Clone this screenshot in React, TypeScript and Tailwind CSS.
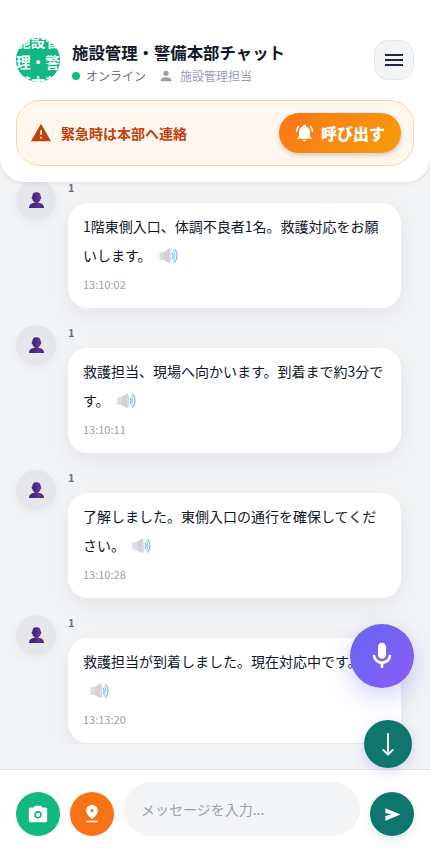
import React from "react";

const messages = [
  { text: "1階東側入口、体調不良者1名。救護対応をお願いします。", time: "13:10:02" },
  { text: "救護担当、現場へ向かいます。到着まで約3分です。", time: "13:10:11" },
  { text: "了解しました。東側入口の通行を確保してください。", time: "13:10:28" },
  { text: "救護担当が到着しました。現在対応中です。", time: "13:13:20" },
];

function Icon({ d, className }: { d: string; className: string }) {
  return (
    <svg viewBox="0 0 24 24" fill="currentColor" className={className} aria-hidden="true">
      <path fillRule="evenodd" d={d} />
    </svg>
  );
}

const paths = {
  account: "M12,4A4,4 0 0,1 16,8A4,4 0 0,1 12,12A4,4 0 0,1 8,8A4,4 0 0,1 12,4M12,14C16.42,14 20,15.79 20,18V20H4V18C4,15.79 7.58,14 12,14Z",
  menu: "M3,6H21V8H3V6M3,11H21V13H3V11M3,16H21V18H3V16Z",
  warning: "M13 14H11V9H13M13 18H11V16H13M1 21H23L12 2L1 21Z",
  bell: "M21,19V20H3V19L5,17V11C5,7.9 7.03,5.17 10,4.29C10,4.19 10,4.1 10,4A2,2 0 0,1 12,2A2,2 0 0,1 14,4C14,4.1 14,4.19 14,4.29C16.97,5.17 19,7.9 19,11V17L21,19M14,21A2,2 0 0,1 12,23A2,2 0 0,1 10,21M19.75,3.19L18.33,4.61C20.04,6.3 21,8.6 21,11H23C23,8.07 21.84,5.25 19.75,3.19M1,11H3C3,8.6 3.96,6.3 5.67,4.61L4.25,3.19C2.16,5.25 1,8.07 1,11Z",
  mic: "M12 14c1.66 0 3-1.34 3-3V5c0-1.66-1.34-3-3-3S9 3.34 9 5v6c0 1.66 1.34 3 3 3zm5.91-3c-.49 0-.9.36-.98.85C16.52 14.2 14.47 16 12 16s-4.52-1.8-4.93-4.15a.998.998 0 0 0-.98-.85c-.61 0-1.09.54-1 1.14.49 3 2.89 5.35 5.91 5.78V20c0 .55.45 1 1 1s1-.45 1-1v-2.08a6.993 6.993 0 0 0 5.91-5.78c.1-.6-.39-1.14-1-1.14z",
  camera: "M4 21q-.825 0-1.412-.587T2 19V7q0-.825.588-1.412T4 5h3.150L9 3h6l1.850 2H20q.825 0 1.413.588T22 7v12q0 .825-.587 1.413T20 21zM12 8.800a4.100 4.100 0 1 0 0 8.200a4.100 4.100 0 1 0 0-8.200zM12 10.500a2.400 2.400 0 1 1 0 4.800a2.400 2.400 0 1 1 0-4.800z",
  pin: "M5 22v-2h14v2zm7-4q-3.525-2.6-5.262-5.05T5 8.15q0-1.775.638-3.112T7.274 2.8t2.25-1.35T12 1t2.475.45t2.25 1.35t1.638 2.238T19 8.15q0 2.35-1.737 4.8T12 18m0-8q.825 0 1.413-.587T14 8t-.587-1.412T12 6t-1.412.588T10 8t.588 1.413T12 10",
  send: "M3 20v-6l8-2l-8-2V4l19 8z",
};

function Bust() {
  return (
    <svg viewBox="0 0 15 16" className="h-4 w-[15px]" aria-hidden="true">
      <defs>
        <linearGradient id="bust" gradientUnits="userSpaceOnUse" x1="0" y1="0" x2="15" y2="0">
          <stop offset="0" stopColor="#4a2a85" />
          <stop offset="0.35" stopColor="#432679" />
          <stop offset="0.65" stopColor="#5f3494" />
          <stop offset="1" stopColor="#42257a" />
        </linearGradient>
      </defs>
      <g fill="url(#bust)">
        <rect x="3.4" y="0.2" width="8.2" height="10" rx="3.8" />
        <rect x="2.6" y="4.4" width="9.800" height="2.600" rx="1.3" />
        <path d="M5.600 9.500h3.800v1.300c3.400.4 5.600 2 5.600 5.200H0c0-3.200 2.200-4.800 5.600-5.200z" />
      </g>
    </svg>
  );
}

function Speaker() {
  return (
    <svg viewBox="0 0 19 16" className="ml-[7px] inline-block h-4 w-[19px] align-[-3px]" aria-hidden="true">
      <path d="M0.300 4.200 4.800 4 10.500 0.600V15L4.800 12 0.300 11.800z" fill="#dedbe2" />
      <path d="M4.800 4 10.500 0.600V15L4.800 12z" fill="#d4d0da" />
      <path d="M10.500 0.600c1.900 2.500 1.900 11.900 0 14.400-1.200-3-1.200-11.400 0-14.400z" fill="#e4e1e8" stroke="#c6c2cd" strokeWidth="0.500" />
      <g fill="none" stroke="#84bdf0" strokeWidth="1.300" strokeLinecap="round">
        <path d="M13.300 5.300c1 1.500 1 3.600 0 5.100" />
        <path d="M14.400 3.200c2 2.600 2 6.700 0 9.300" stroke="#a9d2f5" />
        <path d="M15.900 1.400c2.800 3.600 2.800 9.200 0 12.800" />
      </g>
    </svg>
  );
}

function Header() {
  return (
    <header className="relative z-10 h-[182px] shrink-0 rounded-b-3xl bg-white px-4 pt-[38px] shadow-[0_1px_4px_rgba(0,0,0,0.1)]">
      <div className="flex h-11 items-center">
        <div className="flex size-11 shrink-0 items-center justify-center overflow-hidden rounded-full bg-[#10b981] pt-[3px] text-center text-[14.6px] leading-[21px] font-bold text-white">
          施設管理・警備本部
        </div>
        <div className="ml-3 flex-1 pt-[5px]">
          <h1 className="text-[16.4px] leading-6 font-bold whitespace-nowrap text-gray-900">施設管理・警備本部チャット</h1>
          <div className="mt-0.5 flex h-5 items-center text-xs leading-5">
            <span className="mr-1.5 size-2 rounded-full bg-[#10b981]" />
            <span className="text-gray-500">オンライン</span>
            <Icon d={paths.account} className="mr-1.5 ml-3 size-4 text-gray-400" />
            <span className="text-gray-400">施設管理担当</span>
          </div>
        </div>
        <button className="flex size-10 items-center justify-center rounded-[14px] border border-gray-200 bg-gray-100 text-gray-800">
          <Icon d={paths.menu} className="size-6 shrink-0" />
        </button>
      </div>
      <div className="mt-[18px] flex h-[66px] items-center justify-between rounded-3xl border border-[#fbd5ab] bg-[#fff7ed] pr-3 pl-[13px]">
        <div className="flex items-center gap-[9px] text-sm font-bold text-[#c2410c]">
          <Icon d={paths.warning} className="size-[22px]" />
          緊急時は本部へ連絡
        </div>
        <button className="flex h-10 w-[122px] items-center justify-center gap-[7px] rounded-full bg-linear-135 from-[#f97316] to-[#f59e0b] text-base font-black text-white shadow-[0_2px_5px_rgba(0,0,0,0.2)]">
          <Icon d={paths.bell} className="-mt-0.5 size-[19px]" />
          呼び出す
        </button>
      </div>
    </header>
  );
}

function Message({ text, time }: { text: string; time: string }) {
  return (
    <div className="flex h-[145.2px] shrink-0 items-start gap-3 pl-4">
      <div className="flex size-10 shrink-0 items-center justify-center rounded-full bg-gray-200 shadow-[0_4px_12px_rgba(0,0,0,0.05)]">
        <Bust />
      </div>
      <div className="w-[333px]">
        <div className="h-[23px] text-[11px] leading-[15px] font-bold text-gray-500">1</div>
        <div className="h-[105px] rounded-[20px] bg-white px-[15px] pt-[9px] shadow-[0_8px_24px_rgba(15,23,42,0.07)]">
          <p className="h-[58px] text-sm leading-[29px] text-gray-900">
            {text}
            <Speaker />
          </p>
          <div className="mt-1.5 text-[11px] leading-4 text-gray-400">{time}</div>
        </div>
      </div>
    </div>
  );
}

function Composer() {
  return (
    <footer className="flex h-[91px] shrink-0 items-end gap-2.5 border-t border-gray-200 bg-white px-4 pb-6">
      <button className="flex size-11 shrink-0 items-center justify-center rounded-full bg-[#10b981] text-white">
        <Icon d={paths.camera} className="size-[22px]" />
      </button>
      <button className="flex size-11 shrink-0 items-center justify-center rounded-full bg-[#f97316] text-white">
        <Icon d={paths.pin} className="size-5" />
      </button>
      <div className="flex h-[54px] flex-1 items-center rounded-[27px] bg-gray-100 px-[17px] text-sm text-gray-400">
        メッセージを入力...
      </div>
      <button className="flex size-11 shrink-0 items-center justify-center rounded-full bg-[#0f766e] text-white shadow-[0_4px_10px_rgba(15,118,110,0.15)]">
        <Icon d={paths.send} className="ml-px size-[19px]" />
      </button>
    </footer>
  );
}

export default function App() {
  return (
    <div className="relative flex h-[860px] w-[430px] flex-col overflow-hidden bg-gray-100 font-['Noto_Sans_CJK_JP',sans-serif]">
      <Header />
      <main className="h-[561.5px] shrink-0 overflow-hidden">
        <div className="-mt-[2.5px] flex flex-col">
          {messages.map((m) => (
            <Message key={m.time} {...m} />
          ))}
        </div>
      </main>
      <div className="flex-1" />
      <Composer />
      <button className="absolute top-[624px] left-[350px] z-20 flex size-16 items-center justify-center rounded-full bg-linear-135 from-[#6366f1] to-[#8b5cf6] text-white shadow-[0_8px_24px_rgba(99,102,241,0.3)]">
        <Icon d={paths.mic} className="size-8" />
      </button>
      <button className="absolute top-[720px] left-[364px] z-20 flex size-12 items-center justify-center rounded-full bg-[#0f766e] text-white shadow-[0_4px_12px_rgba(99,102,241,0.25)]">
        <svg viewBox="0 0 24 24" className="size-6" fill="none" stroke="currentColor" strokeWidth="1.9" strokeLinecap="round" strokeLinejoin="round">
          <path d="M12 2V22.500M7.200 17.900 12 22.700l4.800-4.800" />
        </svg>
      </button>
    </div>
  );
}
